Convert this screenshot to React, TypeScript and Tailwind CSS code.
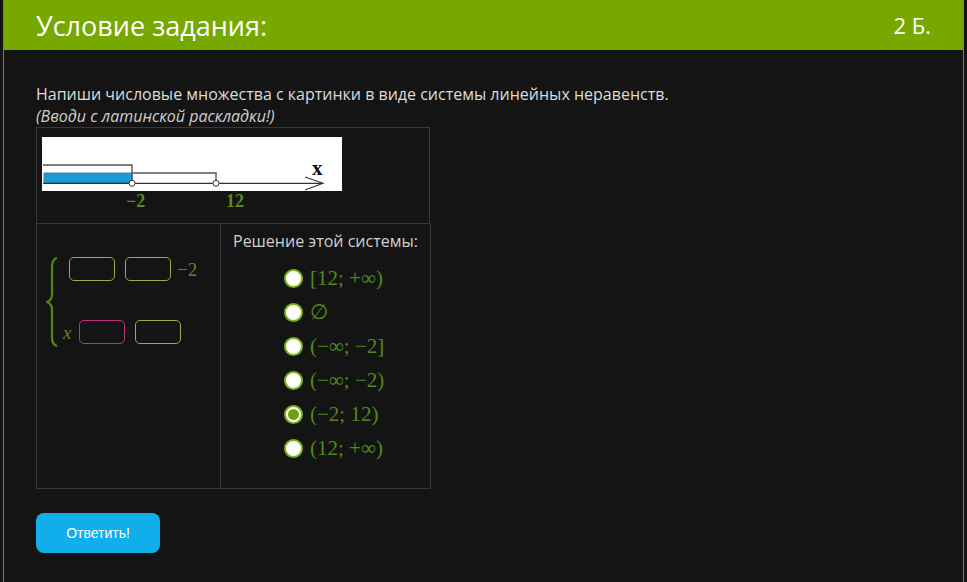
const mathFont = { fontFamily: '"Liberation Serif", "DejaVu Serif", serif' };

const options = [
  { label: "[12; +∞)", checked: false },
  { label: "∅", checked: false },
  { label: "(−∞; −2]", checked: false },
  { label: "(−∞; −2)", checked: false },
  { label: "(−2; 12)", checked: true },
  { label: "(12; +∞)", checked: false },
];

function NumberLine() {
  return (
    <div className="relative w-[300px] h-[76px]">
      <svg width="300" height="54" viewBox="0 0 300 54" className="block">
        <rect x="0" y="0" width="300" height="54" fill="#ffffff" />
        <rect x="2" y="36" width="88" height="10" fill="#1b9bd8" stroke="#2f6f95" strokeWidth="0.8" />
        <polyline points="1,28 90,28 90,46" fill="none" stroke="#555" strokeWidth="1.4" />
        <polyline points="90,36 174,36 174,46" fill="none" stroke="#555" strokeWidth="1.4" />
        <line x1="1" y1="46.3" x2="281" y2="46.3" stroke="#333" strokeWidth="1.2" />
        <polyline points="263,40 281,46.3 263,53" fill="none" stroke="#333" strokeWidth="1.1" />
        <circle cx="90" cy="46.3" r="3" fill="#fff" stroke="#333" strokeWidth="1" />
        <circle cx="174" cy="46.3" r="3" fill="#fff" stroke="#333" strokeWidth="1" />
        <text x="270" y="38" fontSize="21" fontWeight="bold" fill="#111" style={mathFont}>
          x
        </text>
      </svg>
      <span className="absolute left-[84px] top-[53px] text-[18px] leading-[22px] font-bold text-[#5a8a1c]" style={mathFont}>
        −2
      </span>
      <span className="absolute left-[184px] top-[53px] text-[18px] leading-[22px] font-bold text-[#5a8a1c]" style={mathFont}>
        12
      </span>
    </div>
  );
}

function Blank({ pink = false }: { pink?: boolean }) {
  return (
    <div
      className={`w-[46px] h-[24px] rounded-[5px] border ${pink ? "border-[#c2307c]" : "border-[#9aab4c]"}`}
    />
  );
}

function Radio({ checked }: { checked: boolean }) {
  return (
    <div className="w-[19px] h-[19px] rounded-full border-2 border-[#7cb518] bg-white flex items-center justify-center">
      {checked && <div className="w-[11px] h-[11px] rounded-full bg-[#6ea014]" />}
    </div>
  );
}

export default function App() {
  return (
    <div className="min-h-screen bg-[#141414] px-[3px]" style={{ fontFamily: '"Open Sans", "Noto Sans", sans-serif' }}>
      <div className="min-h-screen border-x border-[#7a7a7a]">
        <div className="h-[50px] bg-[#77a800] flex items-center justify-between px-[32px] text-white">
          <span className="text-[27px] leading-none">Условие задания:</span>
          <span className="text-[22px] leading-none">2 Б.</span>
        </div>

        <div className="pl-[32px] pt-[33px]">
          <p className="text-[16px] leading-[22px] text-[#dcdcdc]">
            Напиши числовые множества с картинки в виде системы линейных неравенств.
          </p>
          <p className="text-[16px] leading-[22px] italic text-[#cfcfcf]">(Вводи с латинской раскладки!)</p>

          <div className="w-[394px] h-[97px] border border-[#383838] pl-[5px] pt-[9px]">
            <NumberLine />
          </div>

          <div className="flex w-[395px] h-[265px] border-x border-b border-[#383838]">
            <div className="w-[184px] border-r border-[#383838] flex pt-[33px] pl-[9px]">
              <svg width="12" height="90" viewBox="0 0 12 90" className="shrink-0">
                <path
                  d="M11 1 C7 2 6 5 6 10 L6 37 C6 42 4 44 1 45 C4 46 6 48 6 53 L6 80 C6 85 7 88 11 89"
                  fill="none"
                  stroke="#4f8a14"
                  strokeWidth="2.2"
                />
              </svg>
              <div className="ml-[5px] flex flex-col gap-[39px]">
                <div className="flex items-center h-[24px] ml-[6px]">
                  <Blank />
                  <div className="ml-[10px]">
                    <Blank />
                  </div>
                  <span className="ml-[6px] text-[19px] leading-none text-[#5a8a1c]" style={mathFont}>
                    −2
                  </span>
                </div>
                <div className="flex items-center h-[24px]">
                  <span className="text-[19px] leading-none italic text-[#5a8a1c] w-[10px]" style={mathFont}>
                    x
                  </span>
                  <div className="ml-[6px]">
                    <Blank pink />
                  </div>
                  <div className="ml-[10px]">
                    <Blank />
                  </div>
                </div>
              </div>
            </div>

            <div className="flex-1 pt-[6px]">
              <p className="pl-[12px] text-[16px] leading-[22px] text-[#d0d0d0]">Решение этой системы:</p>
              <div className="mt-[9px] ml-[63px] flex flex-col">
                {options.map((o) => (
                  <div key={o.label} className="h-[34px] flex items-center gap-[7px]">
                    <Radio checked={o.checked} />
                    <span className="text-[21px] leading-none text-[#4f8a1a]" style={mathFont}>
                      {o.label}
                    </span>
                  </div>
                ))}
              </div>
            </div>
          </div>

          <button className="mt-[24px] w-[124px] h-[40px] rounded-[8px] bg-[#10aeea] text-white text-[14px]" style={{ fontFamily: '"Liberation Sans", Arial, sans-serif' }}>
            Ответить!
          </button>
        </div>
      </div>
    </div>
  );
}
